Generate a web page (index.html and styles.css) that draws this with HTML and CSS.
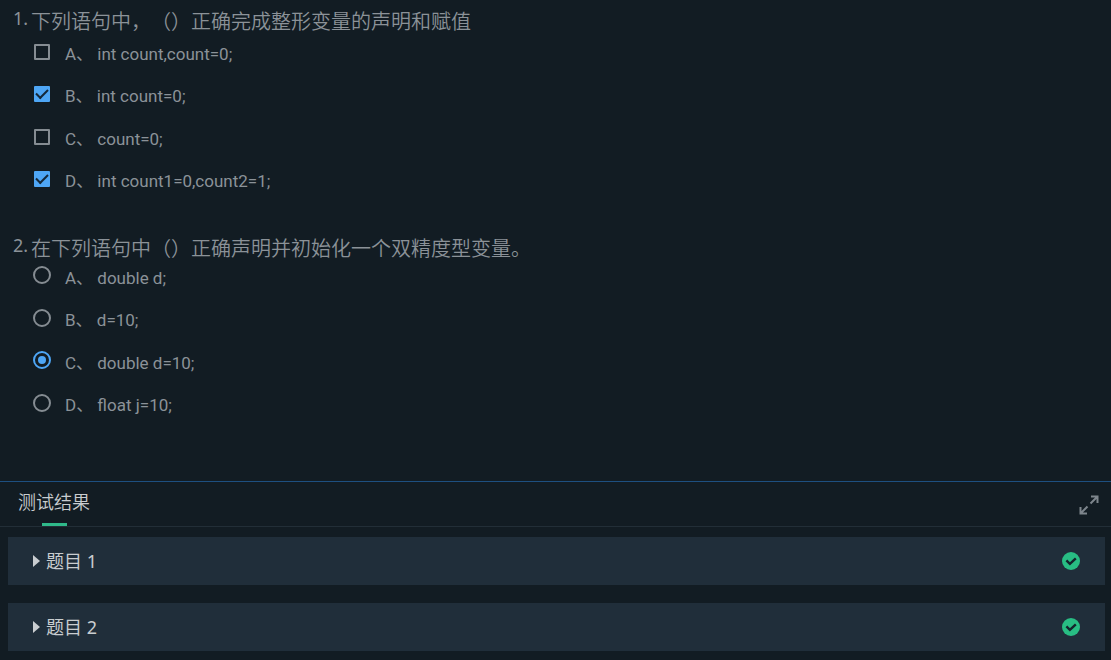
FILE: index.html
```html
<!DOCTYPE html>
<html lang="zh-CN">
<head>
  <meta charset="UTF-8">
  <title>测试结果</title>
  <link rel="stylesheet" href="styles.css">
</head>
<body>

<!-- Questions -->
<form class="questions">
  <fieldset class="question multiple">
    <legend class="title"><span class="num">1.</span><span>下列语句中，（）正确完成整形变量的声明和赋值</span></legend>
    <div class="options">
      <label class="option"><input type="checkbox" name="q1"><span>A、 int count,count=0;</span></label>
      <label class="option"><input type="checkbox" name="q1" checked><span>B、 int count=0;</span></label>
      <label class="option"><input type="checkbox" name="q1"><span>C、 count=0;</span></label>
      <label class="option"><input type="checkbox" name="q1" checked><span>D、 int count1=0,count2=1;</span></label>
    </div>
  </fieldset>

  <fieldset class="question">
    <legend class="title"><span class="num">2.</span><span>在下列语句中（）正确声明并初始化一个双精度型变量。</span></legend>
    <div class="options">
      <label class="option"><input type="radio" name="q2"><span>A、 double d;</span></label>
      <label class="option"><input type="radio" name="q2"><span>B、 d=10;</span></label>
      <label class="option"><input type="radio" name="q2" checked><span>C、 double d=10;</span></label>
      <label class="option"><input type="radio" name="q2"><span>D、 float j=10;</span></label>
    </div>
  </fieldset>
</form>

<!-- Test results -->
<section class="results">
  <header class="results-head">
    <h2 class="tab">测试结果</h2>
    <button class="expand" type="button" aria-label="展开">
      <svg width="20" height="20" viewBox="0 0 20 20" fill="none" stroke="currentColor" stroke-width="2">
        <path d="M12 1.5h6.5V8M18.5 1.5l-7 7M8 18.5H1.5V12M1.5 18.5l7-7"/>
      </svg>
    </button>
  </header>

  <div class="cards">
    <details class="card">
      <summary>
        <span class="arrow"></span>
        <span class="name">题目 1</span>
        <svg class="pass" width="18" height="18" viewBox="0 0 18 18">
          <circle cx="9" cy="9" r="9" fill="#28bd83"/>
          <path d="M4.4 8.4l3.5 3.5 5.9-5.6" fill="none" stroke="#14242c" stroke-width="2.4"/>
        </svg>
      </summary>
    </details>
    <details class="card">
      <summary>
        <span class="arrow"></span>
        <span class="name">题目 2</span>
        <svg class="pass" width="18" height="18" viewBox="0 0 18 18">
          <circle cx="9" cy="9" r="9" fill="#28bd83"/>
          <path d="M4.4 8.4l3.5 3.5 5.9-5.6" fill="none" stroke="#14242c" stroke-width="2.4"/>
        </svg>
      </summary>
    </details>
  </div>
</section>

</body>
</html>
```

FILE: styles.css
```css
* {
  box-sizing: border-box;
}

body {
  margin: 0;
  min-height: 100vh;
  display: flex;
  flex-direction: column;
  background-color: #121c23;
  color: #8b9298;
  font-family: Roboto, "Noto Sans CJK SC", sans-serif;
  text-spacing-trim: space-all;
}

/* Questions */
.questions {
  flex: 1;
  padding: 0 13px;
}

.question {
  margin: 0 0 24px;
  padding: 0;
  border: none;
}

.title {
  display: flex;
  padding: 12px 0 0;
  font-family: "Noto Sans CJK SC", sans-serif;
  font-size: 20px;
  font-weight: 350;
  line-height: 18px;
}

.multiple .title {
  padding-bottom: 3px;
}

.num {
  width: 18px;
  font-family: "Noto Sans", "Noto Sans CJK SC", sans-serif;
  font-size: 18px;
  font-weight: 400;
  line-height: 12px;
}

.options {
  display: grid;
  grid-auto-rows: 1fr;
  height: 170px;
  padding-left: 20px;
}

.option {
  display: flex;
  align-items: center;
  gap: 14px;
  padding-bottom: 1px;
  font-size: 17px;
  line-height: 24px;
  cursor: pointer;
}

.option input {
  appearance: none;
  display: grid;
  place-items: center;
  width: 18px;
  height: 18px;
  margin: 0 0 5px;
  border: 2px solid #858c92;
  cursor: pointer;
}

.option input[type="checkbox"] {
  width: 16px;
  height: 16px;
  margin: 0 1px 4px;
  border-radius: 1px;
}

.option input[type="checkbox"]:checked {
  border-color: #4ea6f5;
  background-color: #4ea6f5;
}

.option input[type="checkbox"]:checked::before {
  content: "";
  width: 10px;
  height: 5px;
  margin-bottom: 3px;
  border-left: 2px solid #14283a;
  border-bottom: 2px solid #14283a;
  transform: rotate(-45deg);
}

.option input[type="radio"] {
  border-radius: 50%;
}

.option input[type="radio"]:checked {
  border-color: #4ea6f5;
}

.option input[type="radio"]:checked::before {
  content: "";
  width: 8px;
  height: 8px;
  border-radius: 50%;
  background-color: #4ea6f5;
}

/* Results panel */
.results {
  border-top: 1px solid #1d4f80;
}

.results-head {
  display: flex;
  justify-content: space-between;
  align-items: center;
  height: 45px;
  padding: 0 12px 0 18px;
  border-bottom: 1px solid #222e37;
}

.tab {
  display: flex;
  flex-direction: column;
  align-items: center;
  justify-content: space-between;
  height: 44px;
  margin: 0;
  padding-top: 7px;
  color: #c9cdd0;
  font-size: 18px;
  font-weight: 350;
  line-height: 28px;
}

/* green line under the open tab */
.tab::after {
  content: "";
  width: 25px;
  height: 3px;
  background-color: #2fb98a;
}

.expand {
  display: flex;
  padding: 2px 0 0;
  border: none;
  background: none;
  color: #7d858c;
  cursor: pointer;
}

.cards {
  display: flex;
  flex-direction: column;
  gap: 18px;
  padding: 10px 6px 9px 8px;
}

.card {
  background-color: #202e3a;
}

.card summary {
  display: flex;
  align-items: center;
  height: 48px;
  padding: 0 25px 1px;
  list-style: none;
  color: #c9cdd0;
  font-family: "Noto Sans", "Noto Sans CJK SC", sans-serif;
  font-size: 18px;
  line-height: 28px;
  cursor: pointer;
}

.arrow {
  border-left: 7px solid #c9cdd0;
  border-top: 6px solid transparent;
  border-bottom: 6px solid transparent;
}

.name {
  flex: 1;
  margin-left: 6px;
}
```
